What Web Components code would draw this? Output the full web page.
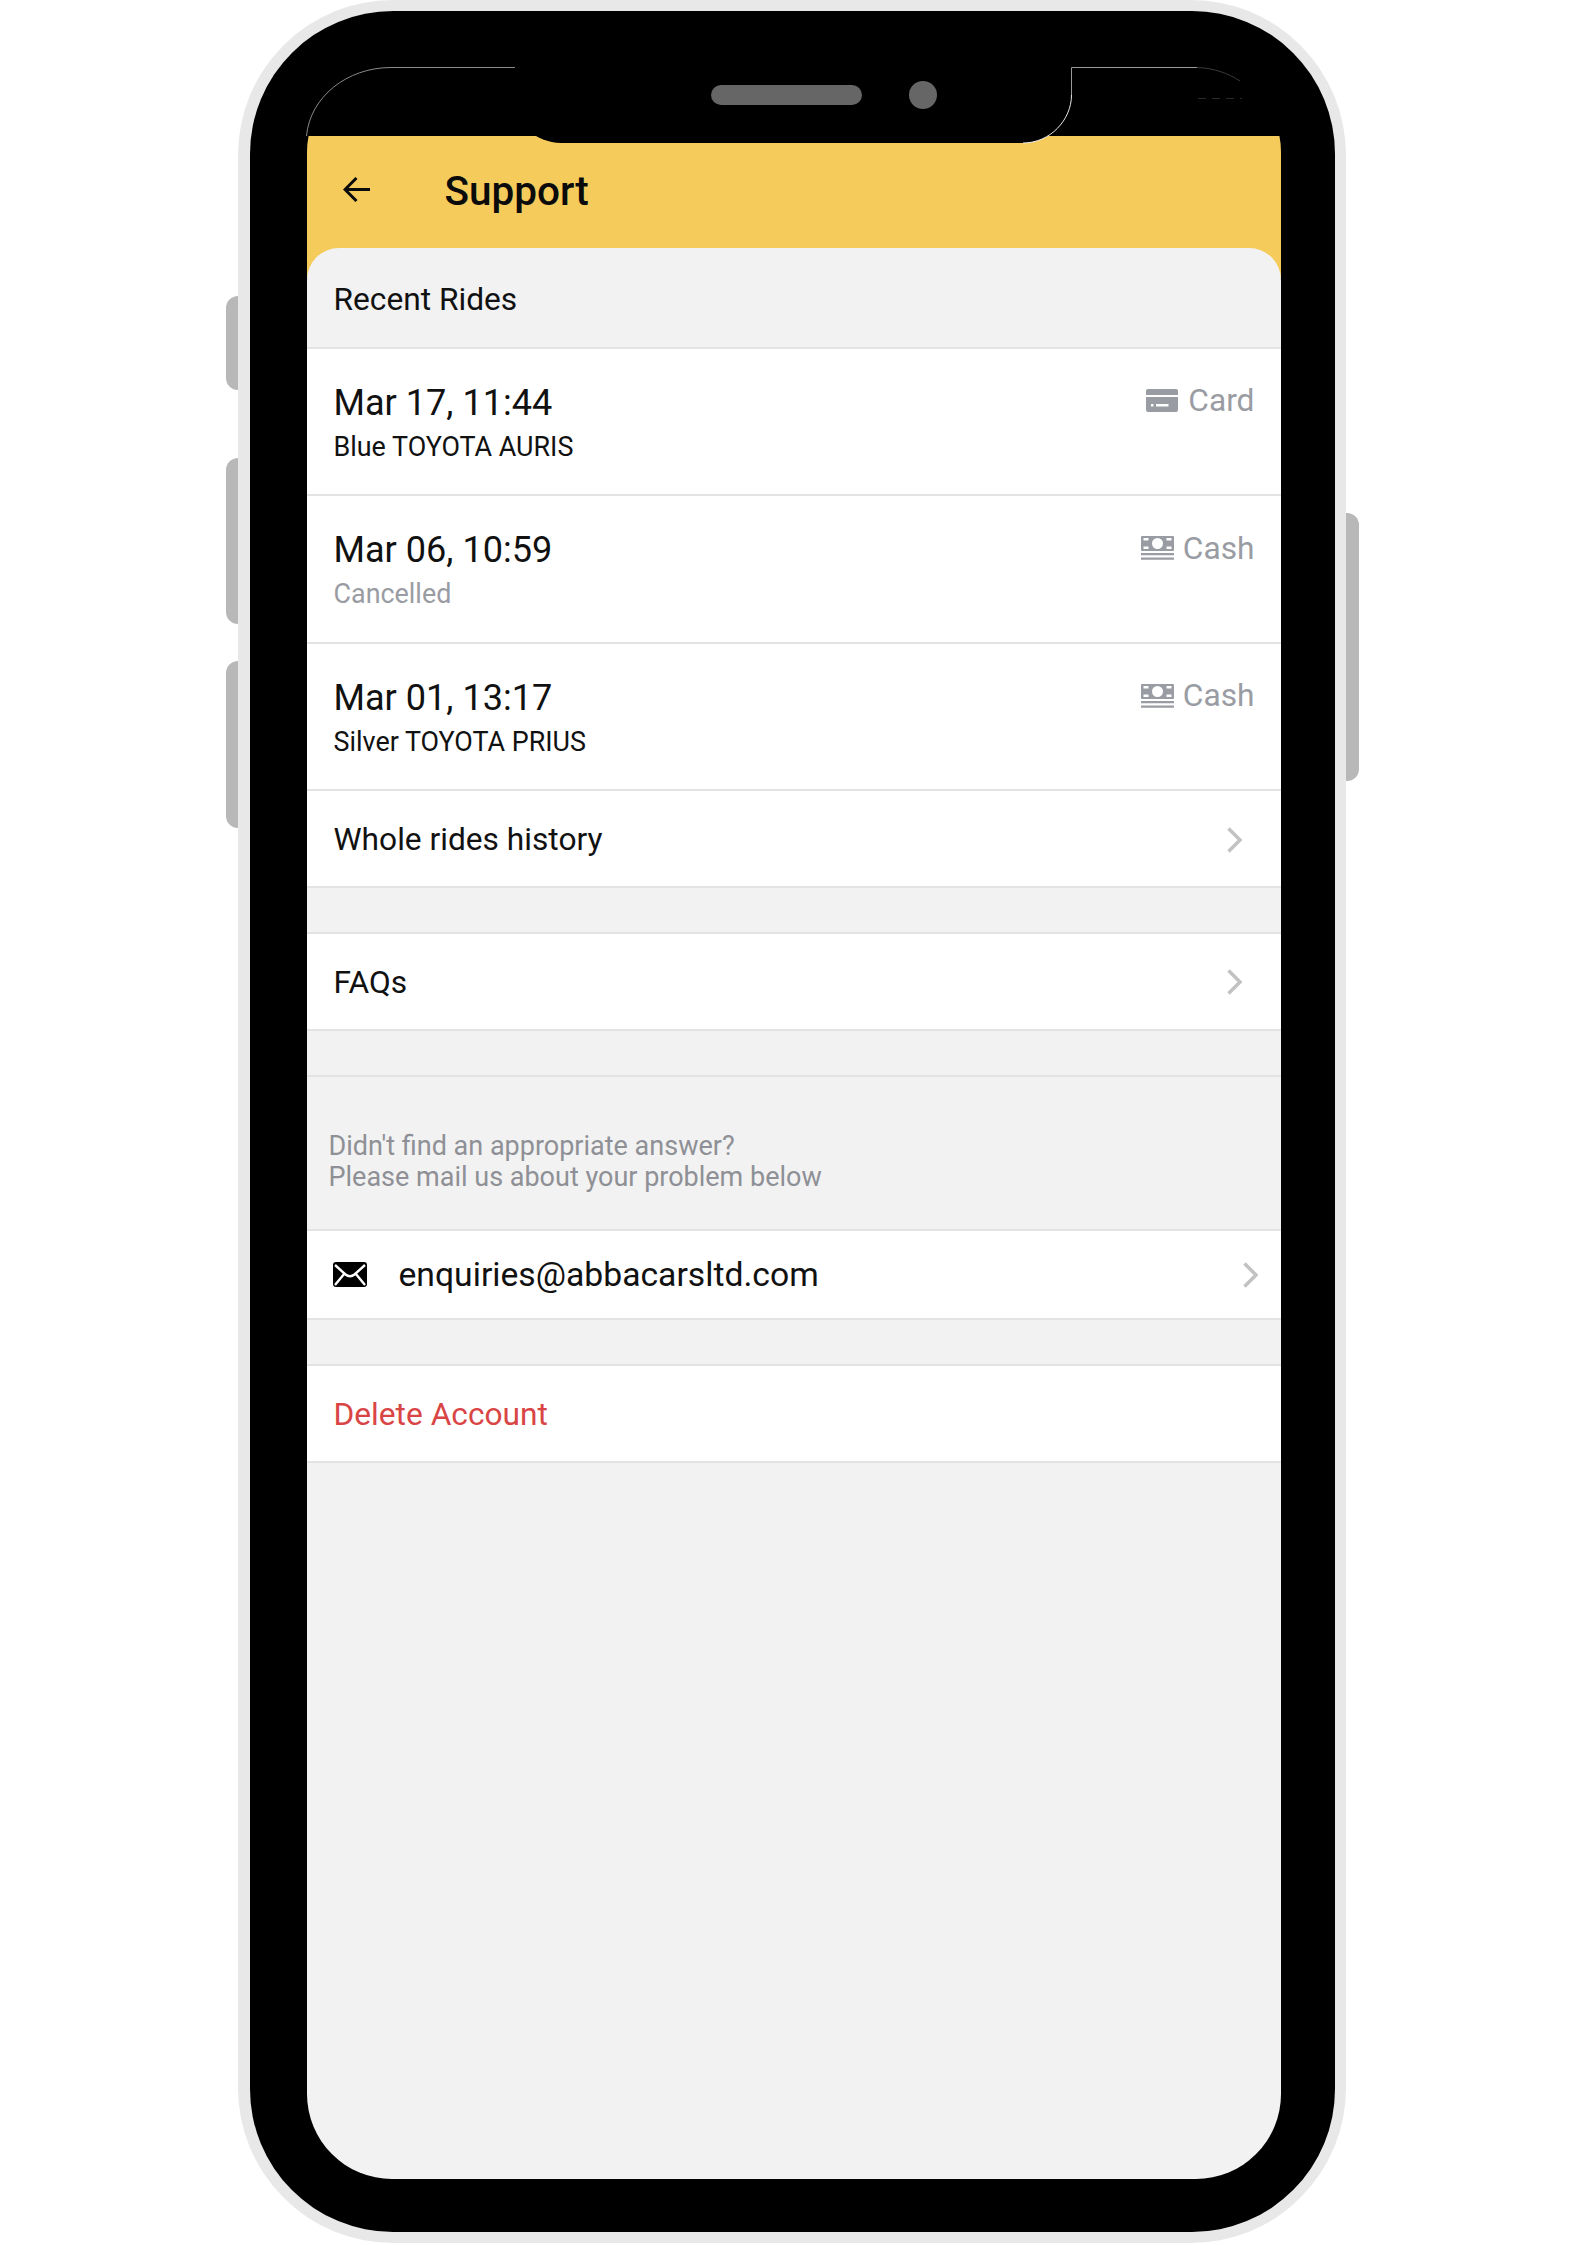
<!DOCTYPE html>
<html lang="en">
    <head>
        <meta charset="UTF-8" />
        <title>Support</title>
        <style>
            html,
            body {
                margin: 0;
                background: #fff;
            }
            body {
                font-family: Roboto, 'Liberation Sans', sans-serif;
            }
        </style>
    </head>
    <body>
        <phone-frame>
            <app-header title="Support"></app-header>
            <support-sheet>
                <section-label>Recent Rides</section-label>
                <ride-row when="Mar 17, 11:44" detail="Blue TOYOTA AURIS" pay="Card"></ride-row>
                <ride-row when="Mar 06, 10:59" detail="Cancelled" pay="Cash" muted></ride-row>
                <ride-row when="Mar 01, 13:17" detail="Silver TOYOTA PRIUS" pay="Cash"></ride-row>
                <link-row chevron first>Whole rides history</link-row>
                <gap-band></gap-band>
                <link-row chevron>FAQs</link-row>
                <gap-band></gap-band>
                <help-note>Didn't find an appropriate answer?<br />Please mail us about your problem below</help-note>
                <mail-row>enquiries@abbacarsltd.com</mail-row>
                <gap-band></gap-band>
                <link-row danger>Delete Account</link-row>
            </support-sheet>
        </phone-frame>

        <template id="phone-frame">
            <style>
                :host {
                    display: block;
                    position: relative;
                    box-sizing: border-box;
                    width: 1108px;
                    height: 2243px;
                    margin-left: 238px;
                    background: #e8e8e8;
                    border-radius: 155px;
                    padding: 11px 11px 11px 12px;
                }
                .btn {
                    position: absolute;
                    background: #b8b8b8;
                    width: 12px;
                }
                .btn.l {
                    left: -12px;
                    border-radius: 12px 0 0 12px;
                }
                .btn.r {
                    right: -13px;
                    width: 13px;
                    border-radius: 0 12px 12px 0;
                }
                .body {
                    box-sizing: border-box;
                    height: 100%;
                    background: #000;
                    border-radius: 143px;
                    padding: 56px 54.5px 53px 56.5px;
                }
                .screen {
                    height: 100%;
                    padding-top: 69px;
                    box-sizing: border-box;
                    border-radius: 85px;
                    overflow: hidden;
                    background: #000;
                    display: flex;
                    flex-direction: column;
                }
                .hair {
                    position: absolute;
                    left: 0;
                    top: 0;
                    pointer-events: none;
                }
                .notch {
                    position: absolute;
                    left: 275px;
                    top: 67px;
                    width: 558px;
                    height: 76px;
                    box-sizing: border-box;
                    background: #000;
                    border-radius: 0 0 48px 48px;
                    display: flex;
                    align-items: center;
                    padding: 0 0 20px 198px;
                    gap: 47px;
                }
                .speaker {
                    width: 151px;
                    height: 20px;
                    border-radius: 10px;
                    background: #666;
                }
                .camera {
                    width: 28px;
                    height: 28px;
                    border-radius: 50%;
                    background: #666;
                }
            </style>
            <div class="btn l" style="top: 296px; height: 94px"></div>
            <div class="btn l" style="top: 458px; height: 166px"></div>
            <div class="btn l" style="top: 661px; height: 167px"></div>
            <div class="btn r" style="top: 513px; height: 268px"></div>
            <div class="body">
                <div class="screen"><slot></slot></div>
            </div>
            <div class="notch">
                <div class="speaker"></div>
                <div class="camera"></div>
            </div>
            <svg class="hair" width="1108" height="200" fill="none">
                <path d="M68.5 136 C72 97 109 67.5 153 67.5 H277" stroke="#8a8a8a" />
                <path d="M833.5 95 V67.5 H959" stroke="#9a9a9a" />
                <path d="M959 67.500 C975 68 990 73 1002 81" stroke="#3a3a3a" />
                <path d="M960 98.500 H1004" stroke="#2a2a2a" stroke-dasharray="8 6" />
                <path d="M833.5 95 C833.5 120 812 143 785 143" stroke="#e8e8e8" />
            </svg>
        </template>

        <template id="app-header">
            <style>
                :host {
                    display: flex;
                    flex: none;
                    align-items: center;
                    box-sizing: border-box;
                    height: 142px;
                    padding: 0 0 30px 36.5px;
                    background: #f5cb5c;
                    color: #0b0b0b;
                }
                svg {
                    flex: none;
                    display: block;
                    margin-top: -5px;
                }
                h1 {
                    margin: -2px 0 0 74.5px;
                    font-size: 40.5px;
                    font-weight: 500;
                    line-height: 48px;
                }
            </style>
            <svg width="27" height="25" viewBox="0 0 27 25" fill="none" stroke="#0b0b0b" stroke-width="3">
                <path d="M27 12.5 H2 M13.5 1 L2 12.5 L13.5 24" />
            </svg>
            <h1></h1>
        </template>

        <template id="support-sheet">
            <style>
                :host {
                    display: flex;
                    flex-direction: column;
                    flex: 1;
                    margin-top: -30px;
                    border-radius: 32px 32px 0 0;
                    background: #f2f2f2;
                }
            </style>
            <slot></slot>
        </template>

        <template id="section-label">
            <style>
                :host {
                    display: flex;
                    align-items: center;
                    flex: none;
                    box-sizing: border-box;
                    height: 100.5px;
                    padding: 5px 0 0 27px;
                    font-size: 31.7px;
                    color: #111;
                    border-bottom: 2px solid #e3e3e3;
                }
            </style>
            <slot></slot>
        </template>

        <template id="ride-row">
            <style>
                :host {
                    display: flex;
                    flex: none;
                    justify-content: space-between;
                    box-sizing: border-box;
                    height: 147.6px;
                    padding: 33px 26px 0 27px;
                    background: #fff;
                    border-bottom: 2px solid #e3e3e3;
                }
                .when {
                    font-size: 36.1px;
                    line-height: 42px;
                    color: #111;
                }
                .detail {
                    font-size: 26.9px;
                    line-height: 32px;
                    margin-top: 7px;
                    color: #111;
                }
                :host([muted]) .detail {
                    color: #9a9ca3;
                }
                .pay {
                    display: flex;
                    align-items: center;
                    gap: 9px;
                    height: 38px;
                    font-size: 31.7px;
                    color: #9a9ca3;
                }
                svg {
                    display: block;
                    fill: #9a9ca3;
                }
                svg.card {
                    margin-right: 1.5px;
                }
            </style>
            <div>
                <div class="when"></div>
                <div class="detail"></div>
            </div>
            <div class="pay"></div>
        </template>

        <template id="link-row">
            <style>
                :host {
                    display: flex;
                    flex: none;
                    align-items: center;
                    justify-content: space-between;
                    box-sizing: border-box;
                    height: 99px;
                    padding: 1px 38.5px 0 27px;
                    font-size: 31.7px;
                    color: #111;
                    background: #fff;
                    border-top: 2px solid #e3e3e3;
                    border-bottom: 2px solid #e3e3e3;
                }
                :host([first]) {
                    height: 97px;
                    padding-top: 2px;
                    border-top: 0;
                }
                :host([danger]) {
                    color: #d94545;
                }
                svg {
                    display: none;
                }
                :host([chevron]) svg {
                    display: block;
                }
            </style>
            <slot></slot>
            <svg width="15" height="26" viewBox="0 0 15 26" fill="none" stroke="#c2c2c2" stroke-width="3.5">
                <path d="M1.5 1.5 L13 13 L1.5 24.5" />
            </svg>
        </template>

        <template id="gap-band">
            <style>
                :host {
                    display: block;
                    flex: none;
                    height: 44px;
                }
            </style>
        </template>

        <template id="help-note">
            <style>
                :host {
                    display: block;
                    flex: none;
                    box-sizing: border-box;
                    height: 154px;
                    padding: 53.5px 0 0 22px;
                    font-size: 27px;
                    line-height: 31px;
                    color: #8e9096;
                    border-top: 2px solid #e3e3e3;
                }
            </style>
            <slot></slot>
        </template>

        <template id="mail-row">
            <style>
                :host {
                    display: flex;
                    flex: none;
                    align-items: center;
                    box-sizing: border-box;
                    height: 91px;
                    padding: 0 22.5px 0 26px;
                    font-size: 33.7px;
                    color: #111;
                    background: #fff;
                    border-top: 2px solid #e3e3e3;
                    border-bottom: 2px solid #e3e3e3;
                }
                .mail {
                    display: block;
                    margin-right: 32px;
                }
                .text {
                    flex: 1;
                }
            </style>
            <svg class="mail" width="34" height="25" viewBox="0 0 34 25">
                <rect width="34" height="25" rx="3" />
                <path d="M2 3 L12.5 12.500 Q17 16 21.500 12.500 L32 3 M2 23 L11.500 11.500 M32 23 L22.500 11.500" fill="none" stroke="#fff" stroke-width="2.4" />
            </svg>
            <div class="text"><slot></slot></div>
            <svg width="15" height="26" viewBox="0 0 15 26" fill="none" stroke="#c2c2c2" stroke-width="3.5">
                <path d="M1.5 1.5 L13 13 L1.5 24.5" />
            </svg>
        </template>

        <script>
            const CARD_ICON =
                '<svg class="card" width="32" height="23" viewBox="0 0 32 23"><path fill-rule="evenodd" d="M2 0 H30 a2 2 0 0 1 2 2 V6 H0 V2 a2 2 0 0 1 2-2 Z M0 8 H32 V21 a2 2 0 0 1-2 2 H2 a2 2 0 0 1-2-2 Z M5 15 v2.500 h2.500 v-2.500 Z M10 15 v2.500 h12.500 v-2.500 Z" /></svg>'
            const CASH_ICON =
                '<svg width="33" height="24" viewBox="0 0 33 24"><path fill-rule="evenodd" d="M1 0 H32 a1 1 0 0 1 1 1 V14 a1 1 0 0 1-1 1 H1 a1 1 0 0 1-1-1 V1 a1 1 0 0 1 1-1 Z M16.5 2 a5.5 5.5 0 1 0 0 11 a5.5 5.5 0 0 0 0-11 Z M2.500 2 v2.500 h5 v-2.500 Z M25.500 2 v2.500 h5 v-2.500 Z M2.500 10.500 v2.500 h5 v-2.500 Z M25.500 10.500 v2.500 h5 v-2.500 Z" /><path d="M0 17 H33 V19.200 H0 Z M0 21.500 H33 V23.700 H0 Z" /></svg>'

            function define(name, setup) {
                customElements.define(
                    name,
                    class extends HTMLElement {
                        constructor() {
                            super()
                            const content = document.querySelector('#' + name).content
                            this.attachShadow({ mode: 'open' }).appendChild(content.cloneNode(true))
                            if (setup) setup(this)
                        }
                    }
                )
            }

            define('phone-frame')
            define('support-sheet')
            define('section-label')
            define('link-row')
            define('gap-band')
            define('help-note')
            define('mail-row')
            define('app-header', (el) => {
                el.shadowRoot.querySelector('h1').textContent = el.getAttribute('title')
            })
            define('ride-row', (el) => {
                const root = el.shadowRoot
                const pay = el.getAttribute('pay')
                root.querySelector('.when').textContent = el.getAttribute('when')
                root.querySelector('.detail').textContent = el.getAttribute('detail')
                root.querySelector('.pay').innerHTML = (pay === 'Card' ? CARD_ICON : CASH_ICON) + '<span>' + pay + '</span>'
            })
        </script>
    </body>
</html>
